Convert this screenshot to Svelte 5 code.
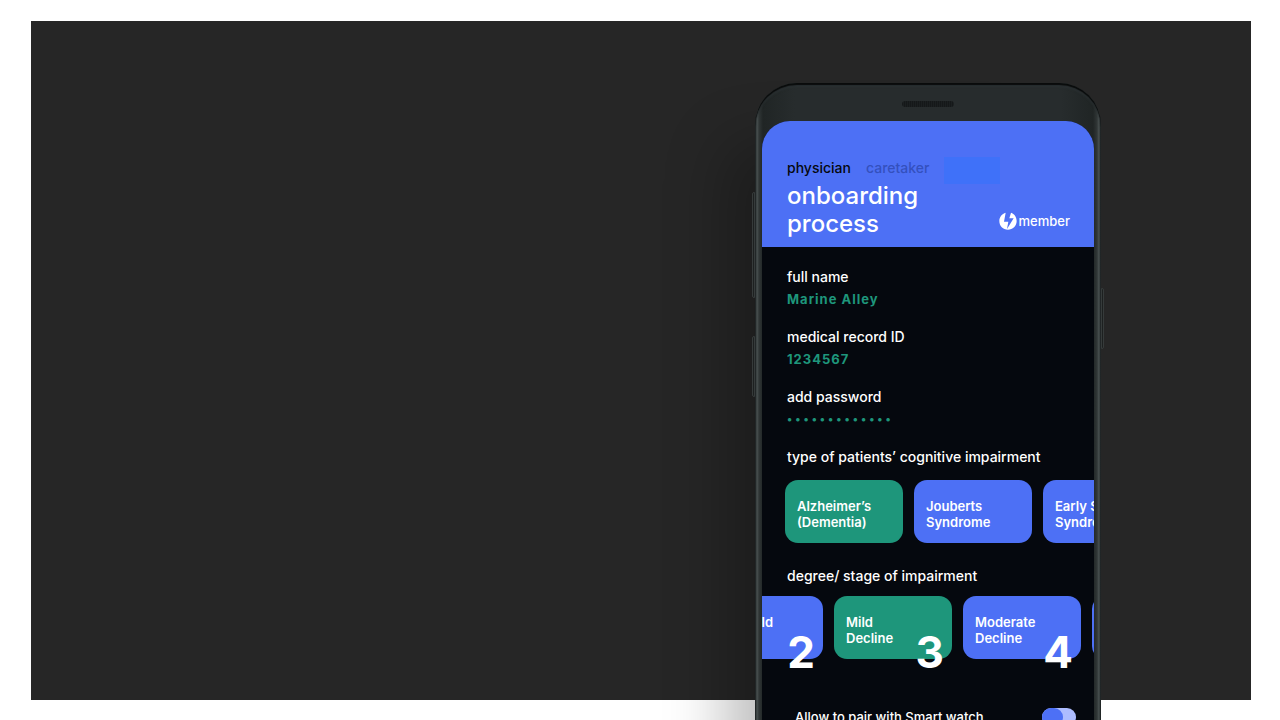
<script>
  let roles = ['physician', 'caretaker'];
  let role = $state('physician');
  let fullName = $state('Marine Alley');
  let recordId = $state('1234567');
  let password = $state('memberaccount');
  let paired = $state(false);

  const types = [
    ['Alzheimer’s', '(Dementia)'],
    ['Jouberts', 'Syndrome'],
    ['Early S', 'Syndro']
  ];
  let type = $state(0);

  const stages = [
    { lines: ['ld'], number: 2, tail: true },
    { lines: ['Mild', 'Decline'], number: 3 },
    { lines: ['Moderate', 'Decline'], number: 4 },
    { lines: [], number: null }
  ];
  let stage = $state(1);
</script>

<main class="page">
  <div class="backdrop"></div>

  <section class="phone">
    <i class="key volume"></i>
    <i class="key assist"></i>
    <i class="key power"></i>
    <div class="bezel"><div class="speaker"></div></div>

    <div class="screen">
      <header>
        <nav>
          {#each roles as name}
            <button class="role" class:current={role === name} onclick={() => (role = name)}>{name}</button>
          {/each}
          <span class="patch"></span>
        </nav>
        <div class="title">
          <h1>onboarding<br />process</h1>
          <div class="brand">
            <svg width="18" height="18" viewBox="0 0 54 54" aria-hidden="true">
              <path d="M20 2C9 5 1 15 1 27c0 15 11 26 26 26 14 0 26-11 26-26C53 15 46 5 36 2L31 19h13L24 51l4-22H15z" fill="#fff" />
            </svg>
            <span>member</span>
          </div>
        </div>
      </header>

      <form onsubmit={(e) => e.preventDefault()}>
        <div class="field">
          <label for="full-name">full name</label>
          <input id="full-name" type="text" bind:value={fullName} />
        </div>
        <div class="field">
          <label for="record-id">medical record ID</label>
          <input id="record-id" type="text" bind:value={recordId} />
        </div>
        <div class="field">
          <label for="password">add password</label>
          <input id="password" type="password" autocomplete="off" bind:value={password} />
        </div>

        <h2>type of patients’ cognitive impairment</h2>
        <div class="cards">
          {#each types as lines, i}
            <button type="button" class="card" class:chosen={type === i} onclick={() => (type = i)}>
              {#each lines as line}<span>{line}</span>{/each}
            </button>
          {/each}
        </div>

        <h2 class="second">degree/ stage of impairment</h2>
        <div class="cards stages">
          {#each stages as item, i}
            <button type="button" class="card" class:chosen={stage === i} class:tail={item.tail} onclick={() => (stage = i)}>
              {#each item.lines as line}<span>{line}</span>{/each}
              {#if item.number}<b>{item.number}</b>{/if}
            </button>
          {/each}
        </div>

        <div class="pair">
          <label for="pair">Allow to pair with Smart watch</label>
          <input id="pair" type="checkbox" bind:checked={paired} />
        </div>
      </form>
    </div>
  </section>
</main>

<style>
  :global(body) {
    background: #fff;
  }

  .page {
    box-sizing: border-box;
    height: 100vh;
    padding: 21px 29px 0 31px;
    display: grid;
    grid-template: minmax(0, 1fr) / minmax(0, 1fr);
    overflow: hidden;
    font-family: Inter, 'Liberation Sans', sans-serif;
    color: #fff;
  }

  .backdrop {
    grid-area: 1 / 1;
    margin-bottom: 20px;
    background: #262626;
  }

  .phone {
    grid-area: 1 / 1;
    justify-self: end;
    align-self: start;
    position: relative;
    box-sizing: border-box;
    width: 346px;
    margin: 62px 150px 0 0;
    padding: 0 7px 40px;
    border-radius: 42px;
    background: linear-gradient(90deg, #171b1b 0, #4a5252 2px, #303636 4px, #202525 8px, #272c2d 40px, #272c2d 306px, #202525 338px, #303636 342px, #4a5252 344px, #171b1b 346px);
    box-shadow:
      inset 0 2px 1px #090b0b,
      inset 0 4px 2px #2a3032,
      -50px 40px 60px -20px rgba(0, 0, 0, 0.25);
  }

  .key {
    position: absolute;
    width: 3px;
    box-sizing: border-box;
    border: 1px solid #363b3b;
    background: #1d2020;
  }

  .volume {
    left: -3px;
    top: 109px;
    height: 106px;
    border-radius: 2px 0 0 2px;
  }

  .assist {
    left: -3px;
    top: 253px;
    height: 61px;
    border-radius: 2px 0 0 2px;
  }

  .power {
    right: -3px;
    top: 205px;
    height: 61px;
    border-radius: 0 2px 2px 0;
  }

  .bezel {
    height: 38px;
    display: flex;
    align-items: center;
    justify-content: center;
  }

  .speaker {
    width: 52px;
    height: 6px;
    margin-top: 4px;
    border-radius: 3px;
    background: repeating-linear-gradient(90deg, #151819 0 1px, #1b1f20 1px 2px);
  }

  .screen {
    overflow: hidden;
    border-radius: 28px 28px 24px 24px;
    background: #05080e;
  }

  header {
    padding: 36px 24px 9px 25px;
    background: #4d70f5;
  }

  nav {
    display: flex;
    align-items: flex-start;
    gap: 15px;
  }

  button,
  input {
    margin: 0;
    padding: 0;
    border: 0;
    background: none;
    color: inherit;
    font: inherit;
  }

  .role {
    font-size: 14px;
    font-weight: 500;
    line-height: 22px;
    color: #3450be;
  }

  .role.current {
    color: #05080e;
  }

  .patch {
    width: 56px;
    height: 27px;
    background: #3f71f9;
  }

  .title {
    display: flex;
    justify-content: space-between;
    align-items: flex-end;
    margin-top: -2px;
  }

  h1 {
    margin: 0;
    font-size: 24px;
    font-weight: 500;
    line-height: 28px;
  }

  .brand {
    display: flex;
    align-items: center;
    gap: 2px;
    margin-bottom: 8px;
    font-size: 13px;
    font-weight: 500;
    line-height: 18px;
  }

  form {
    padding: 20px 18px 40px 25px;
  }

  .field {
    display: flex;
    flex-direction: column;
    margin-bottom: 16px;
  }

  label,
  h2 {
    margin: 0;
    font-size: 14px;
    font-weight: 500;
    line-height: 20px;
  }

  .field input {
    height: 24px;
    outline: none;
    color: #1e967b;
    font-size: 13px;
    font-weight: 700;
    letter-spacing: 1px;
  }

  .field input[type='password'] {
    font-size: 11px;
    letter-spacing: 3px;
  }

  .cards {
    display: flex;
    gap: 11px;
    margin: 13px 0 0 -2px;
  }

  .card {
    position: relative;
    box-sizing: border-box;
    flex: 0 0 118px;
    height: 63px;
    padding: 18px 12px 0;
    display: flex;
    flex-direction: column;
    border-radius: 13px;
    background: #4d70f5;
    font-size: 13px;
    font-weight: 600;
    line-height: 16px;
    text-align: left;
  }

  .card.chosen {
    background: #1e967b;
  }

  .card.tail {
    padding-right: 50px;
    text-align: right;
  }

  .card b {
    position: absolute;
    right: 8px;
    bottom: -16px;
    font-size: 44px;
    font-weight: 700;
    line-height: 46px;
  }

  .second {
    margin-top: 23px;
  }

  .stages {
    margin: 10px 0 0 -82px;
  }

  .pair {
    display: flex;
    align-items: center;
    justify-content: space-between;
    margin-top: 48px;
    padding-left: 8px;
  }

  .pair label {
    font-size: 13px;
  }

  .pair input {
    appearance: none;
    width: 34px;
    height: 18px;
    border-radius: 9px;
    background: #adbcff;
  }

  .pair input::before {
    content: '';
    display: block;
    width: 21px;
    height: 18px;
    border-radius: 9px;
    background: #4d70f5;
  }

  .pair input:checked::before {
    margin-left: 13px;
  }
</style>
